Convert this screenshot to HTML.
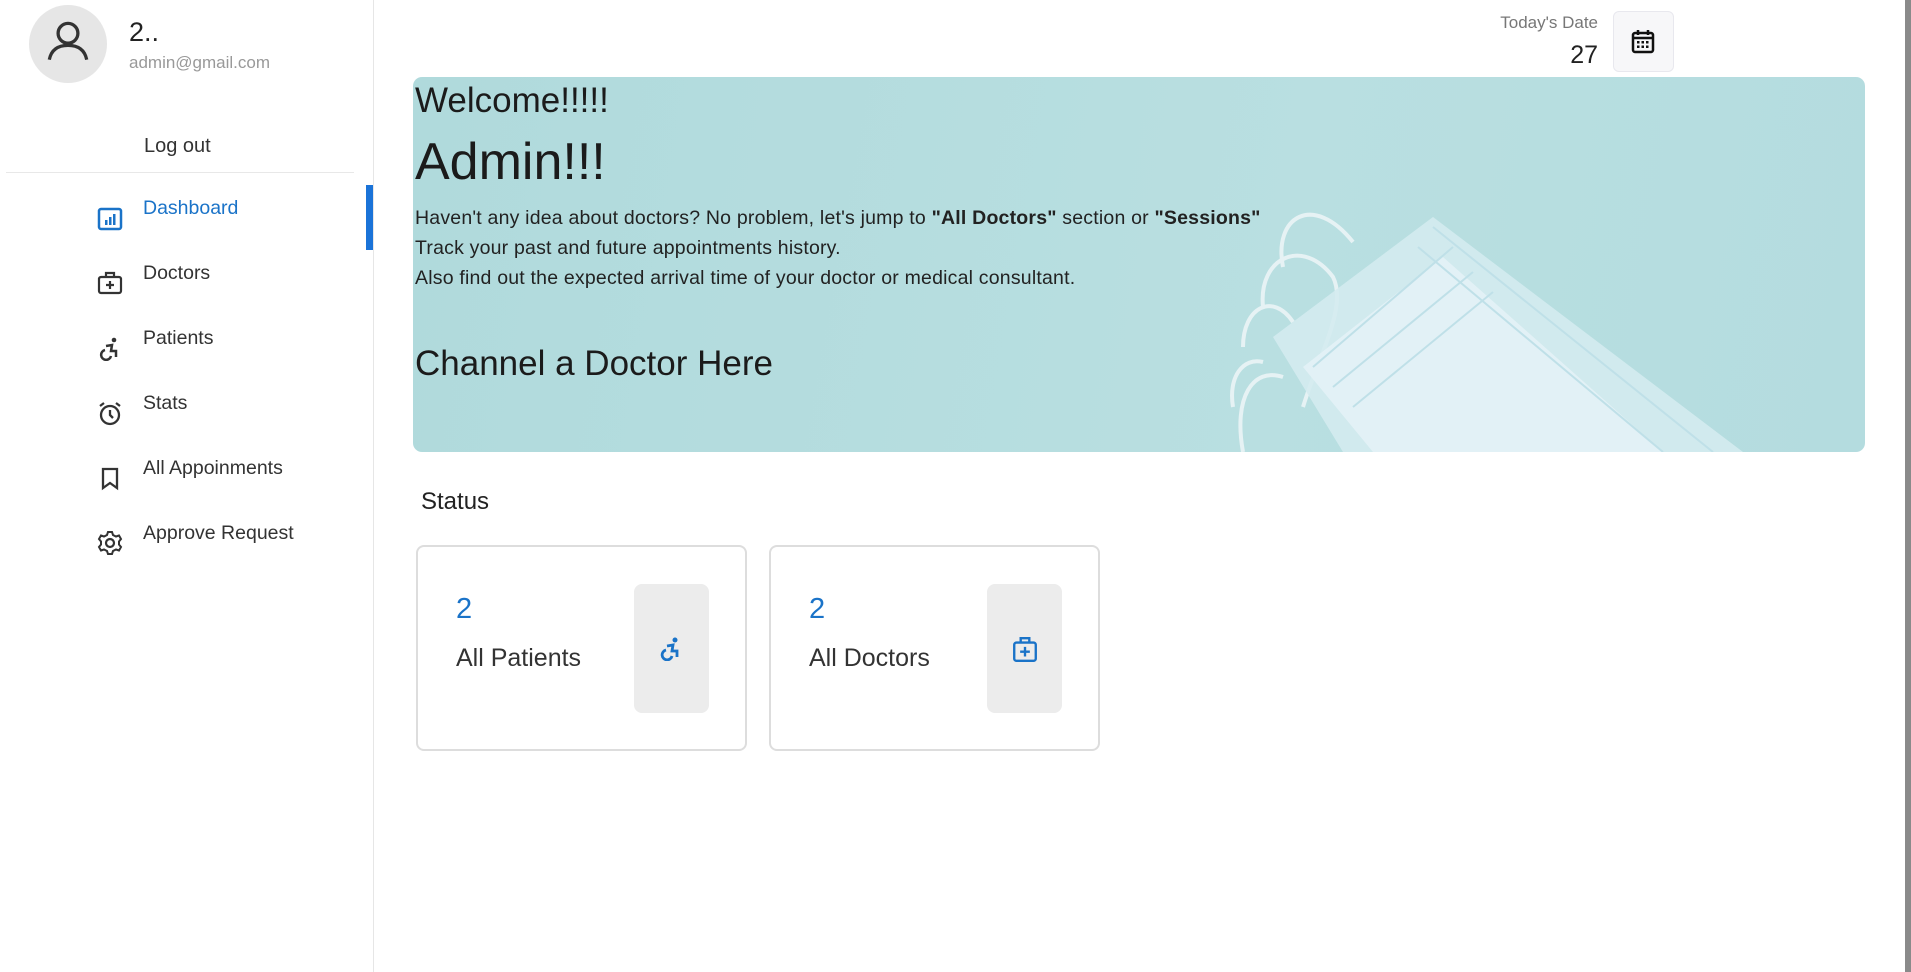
<!DOCTYPE html>
<html><head><meta charset="utf-8"><style>
*{margin:0;padding:0;box-sizing:border-box}
body{width:1911px;height:972px;background:#fff;font-family:"Liberation Sans",sans-serif;position:relative;overflow:hidden;color:#222}
.a{position:absolute}
.nav{position:absolute;left:97px;width:260px;height:40px}
.nav svg{position:absolute;left:0;top:8px}
.nav span{position:absolute;left:46px;top:0;font-size:19.5px;color:#333}
.card{position:absolute;top:545px;width:331px;height:206px;border:2px solid #ddd;border-radius:8px;background:#fff}
.card .n{position:absolute;left:38px;top:46px;font-size:29px;color:#1a73c8}
.card .t{position:absolute;left:38px;top:97px;font-size:25px;color:#333}
.card .g{position:absolute;left:216px;top:37px;width:75px;height:129px;background:#ececec;border-radius:8px}
.card .g svg{position:absolute;left:24px;top:51px}
</style></head><body>
<div class="a" style="left:29px;top:5px;width:78px;height:78px;border-radius:50%;background:#e6e6e6"></div>
<svg class="a" style="left:46px;top:19px" width="44" height="44" viewBox="0 0 40 40"><circle cx="20" cy="13" r="9" fill="none" stroke="#333" stroke-width="3"/><path d="M3 37 C5 27 12 24 20 24 C28 24 35 27 37 37" fill="none" stroke="#333" stroke-width="3"/></svg>
<div class="a" style="left:129px;top:17px;font-size:27px;color:#222">2..</div>
<div class="a" style="left:129px;top:53px;font-size:17px;color:#999">admin@gmail.com</div>
<div class="a" style="left:144px;top:135px;font-size:20px;color:#333">Log out</div>
<div class="a" style="left:6px;top:172px;width:348px;height:1px;background:#e8e8e8"></div>
<div class="a" style="left:373px;top:0;width:1px;height:972px;background:#e6e6e6"></div>
<div class="a" style="left:366px;top:185px;width:7px;height:65px;background:#1a73d8"></div>

<div class="nav" style="top:197px"><svg width="26" height="26" viewBox="0 0 26 26"><rect x="2" y="4" width="22" height="20" rx="2" fill="none" stroke="#1a73c8" stroke-width="2.5"/><rect x="8" y="15" width="2.5" height="5" fill="#1a73c8"/><rect x="12" y="12" width="2.5" height="8" fill="#1a73c8"/><rect x="16" y="9" width="2.5" height="11" fill="#1a73c8"/></svg><span style="color:#1a73c8">Dashboard</span></div>
<div class="nav" style="top:262px"><svg width="26" height="26" viewBox="0 0 26 26"><rect x="2" y="7" width="22" height="16" rx="2" fill="none" stroke="#333" stroke-width="2.2"/><path d="M9 7V3h8v4M13 11v8M9 15h8" fill="none" stroke="#333" stroke-width="2.2"/></svg><span>Doctors</span></div>
<div class="nav" style="top:327px"><svg width="26" height="26" viewBox="0 0 26 26"><circle cx="17" cy="5" r="2.3" fill="#333"/><path d="M9 11l6-1-1 6h5v6M8 15a5 5 0 1 0 6 6" fill="none" stroke="#333" stroke-width="2.5"/></svg><span>Patients</span></div>
<div class="nav" style="top:392px"><svg width="26" height="26" viewBox="0 0 26 26"><circle cx="13" cy="15" r="9" fill="none" stroke="#333" stroke-width="2.3"/><path d="M13 10v5l3 3M3 6l4-3M23 6l-4-3" fill="none" stroke="#333" stroke-width="2.3"/></svg><span>Stats</span></div>
<div class="nav" style="top:457px"><svg width="26" height="26" viewBox="0 0 26 26"><path d="M6 4h14v19l-7-5-7 5z" fill="none" stroke="#333" stroke-width="2.3"/></svg><span>All Appoinments</span></div>
<div class="nav" style="top:522px"><svg width="26" height="26" viewBox="0 0 26 26"><circle cx="13" cy="13" r="4" fill="none" stroke="#333" stroke-width="2.2"/><path d="M11 2h4l1 3 3 1.5 3-1 2 3.5-2 2.5v3l2 2.5-2 3.5-3-1-3 1.5-1 3h-4l-1-3-3-1.5-3 1-2-3.5 2-2.5v-3l-2-2.5 2-3.5 3 1 3-1.5z" fill="none" stroke="#333" stroke-width="2"/></svg><span>Approve Request</span></div>

<div class="a" style="left:1400px;top:13px;width:198px;text-align:right;font-size:17px;color:#777">Today's Date</div>
<div class="a" style="left:1400px;top:41px;width:198px;text-align:right;font-size:25px;color:#222">27</div>
<div class="a" style="left:1613px;top:11px;width:61px;height:61px;border:1px solid #e8e8ee;border-radius:6px;background:#f7f7f9"></div>
<svg class="a" style="left:1630px;top:28px" width="26" height="26" viewBox="0 0 26 26"><rect x="3" y="5" width="20" height="19" rx="2" fill="none" stroke="#111" stroke-width="2.5"/><path d="M3 10h20M8 2v5M18 2v5" stroke="#111" stroke-width="2.5"/><g fill="#111"><rect x="7" y="13" width="2.5" height="2.5"/><rect x="11.5" y="13" width="2.5" height="2.5"/><rect x="16" y="13" width="2.5" height="2.5"/><rect x="7" y="17.5" width="2.5" height="2.5"/><rect x="11.5" y="17.5" width="2.5" height="2.5"/><rect x="16" y="17.5" width="2.5" height="2.5"/></g></svg>

<div class="a" style="left:413px;top:77px;width:1452px;height:375px;border-radius:9px;background:linear-gradient(100deg,#b0dadc,#b9dfe1 60%,#b4dcdf);overflow:hidden">
<svg width="1452" height="375" viewBox="0 0 1452 375">
<g fill="none" stroke="#eef6f8" stroke-width="4" opacity="0.85">
<path d="M870 190 C860 140 900 115 940 165"/>
<path d="M850 230 C845 180 890 160 920 200 C935 230 905 280 890 330"/>
<path d="M830 270 C830 230 860 215 880 245"/>
<path d="M830 375 C820 320 840 290 870 300"/>
<path d="M820 330 C815 300 830 280 850 285"/>
</g>
<path d="M860 260 L1020 140 L1330 375 L930 375 Z" fill="#d4ebf0" opacity="0.9"/>
<path d="M890 290 L1030 180 L1250 375 L960 375 Z" fill="#e3f2f6" opacity="0.9"/>
<g stroke="#bfe0e8" stroke-width="2"><path d="M900 290 L1040 170"/><path d="M920 310 L1060 195"/><path d="M940 330 L1080 215"/><path d="M1020 150 L1300 375"/><path d="M1005 170 L1250 375"/></g>
</svg>
<div class="a" style="left:2px;top:4px;font-size:35px;color:#1b1b1b">Welcome!!!!!</div>
<div class="a" style="left:2px;top:55px;font-size:52px;color:#1b1b1b">Admin!!!</div>
<div class="a" style="left:2px;top:126px;font-size:19.5px;line-height:30px;color:#222;letter-spacing:0.2px">Haven't any idea about doctors? No problem, let's jump to <b>"All Doctors"</b> section or <b>"Sessions"</b><br>Track your past and future appointments history.<br>Also find out the expected arrival time of your doctor or medical consultant.</div>
<div class="a" style="left:2px;top:267px;font-size:35px;color:#1b1b1b">Channel a Doctor Here</div>
</div>

<div class="a" style="left:421px;top:488px;font-size:24px;color:#222">Status</div>
<div class="card" style="left:416px"><div class="n">2</div><div class="t">All Patients</div><div class="g"><svg width="26" height="26" viewBox="0 0 26 26"><circle cx="17" cy="5" r="2.5" fill="#1a73c8"/><path d="M9 11l6-1-1 6h5v6M8 15a5 5 0 1 0 6 6" fill="none" stroke="#1a73c8" stroke-width="2.8"/></svg></div></div>
<div class="card" style="left:769px"><div class="n">2</div><div class="t">All Doctors</div><div class="g"><svg width="28" height="28" viewBox="0 0 26 26"><rect x="3" y="7" width="20" height="17" rx="2" fill="none" stroke="#1a73c8" stroke-width="2.2"/><path d="M9 7V3h8v4M13 11v9M8.5 15.5h9" fill="none" stroke="#1a73c8" stroke-width="2.2"/></svg></div></div>
<div class="a" style="left:1905px;top:0;width:6px;height:972px;background:#8a8a8a"></div>
</body></html>
